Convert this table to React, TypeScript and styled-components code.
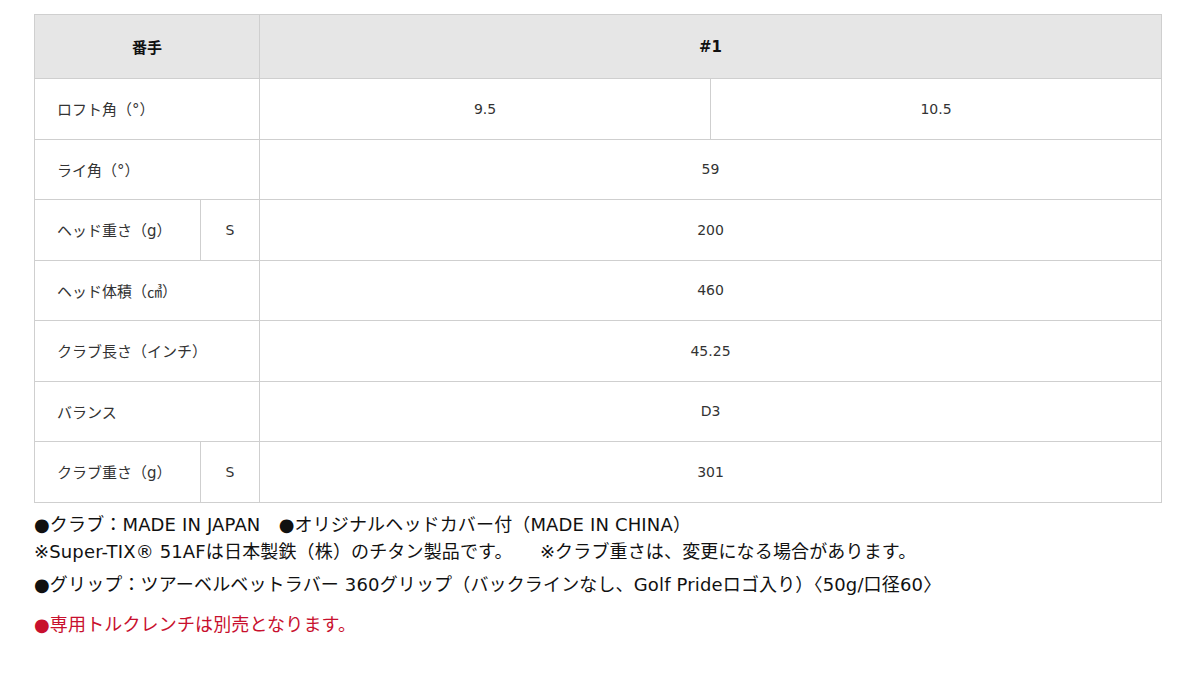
import styled, { createGlobalStyle } from 'styled-components';

const GlobalStyle = createGlobalStyle`
  body {
    margin: 0;
    background: #fff;
    font-family: "DejaVu Sans", "Noto Sans CJK JP", sans-serif;
    color: #222;
  }
`;

const specs = [
  { label: 'ライ角（°）', value: '59' },
  { label: 'ヘッド重さ（g）', sub: 'S', value: '200' },
  { label: 'ヘッド体積（㎤）', value: '460' },
  { label: 'クラブ長さ（インチ）', value: '45.25' },
  { label: 'バランス', value: 'D3' },
  { label: 'クラブ重さ（g）', sub: 'S', value: '301' },
];

const App = () => {
  return (
    <Page>
      <GlobalStyle />
      <SpecTable>
        <colgroup>
          <col style={{ width: 166 }} />
          <col style={{ width: 59 }} />
          <col />
          <col />
        </colgroup>
        <tbody>
          <HeadRow>
            <HeadCell colSpan={2}>番手</HeadCell>
            <HeadCell colSpan={2}>#1</HeadCell>
          </HeadRow>
          <Row>
            <Label colSpan={2}>ロフト角（°）</Label>
            <Value>9.5</Value>
            <Value>10.5</Value>
          </Row>
          {specs.map((s) => (
            <Row key={s.label}>
              {s.sub ? (
                <>
                  <Label>{s.label}</Label>
                  <Value>{s.sub}</Value>
                </>
              ) : (
                <Label colSpan={2}>{s.label}</Label>
              )}
              <Value colSpan={2}>{s.value}</Value>
            </Row>
          ))}
        </tbody>
      </SpecTable>

      <Notes>
        <Note>
          ●クラブ：MADE IN JAPAN　●オリジナルヘッドカバー付（MADE IN CHINA）
          <br />
          ※Super-TIX® 51AFは日本製鉄（株）のチタン製品です。　　※クラブ重さは、変更になる場合があります。
        </Note>
        <Note $gap={6}>
          ●グリップ：ツアーベルベットラバー 360グリップ（バックラインなし、Golf Prideロゴ入り）〈50g/口径60〉
        </Note>
        <Note $gap={13} $red>
          ●専用トルクレンチは別売となります。
        </Note>
      </Notes>
    </Page>
  );
};

const Page = styled.div`
  padding: 14px 38px 0 34px;
`;

const SpecTable = styled.table`
  width: 1128px;
  border-collapse: collapse;
  table-layout: fixed;
  font-size: 14px;
`;

const HeadRow = styled.tr`
  height: 64px;
  background: #e6e6e6;
`;

const HeadCell = styled.th`
  border: 1px solid #cfcfcf;
  font-weight: bold;
  font-size: 15px;
  color: #111;
  text-align: center;
`;

const Row = styled.tr`
  height: 60.5px;
`;

const Label = styled.td`
  border: 1px solid #cfcfcf;
  padding-left: 22px;
  font-size: 15px;
  color: #333;
  white-space: nowrap;
`;

const Value = styled.td`
  border: 1px solid #cfcfcf;
  text-align: center;
  color: #333;
`;

const Notes = styled.div`
  padding-top: 8px;
`;

const Note = styled.p<{ $gap?: number; $red?: boolean }>`
  margin: ${(p) => p.$gap ?? 0}px 0 0;
  font-size: 18px;
  line-height: 27px;
  letter-spacing: 0.15px;
  color: ${(p) => (p.$red ? '#c8102e' : '#111')};
`;

export default App;
